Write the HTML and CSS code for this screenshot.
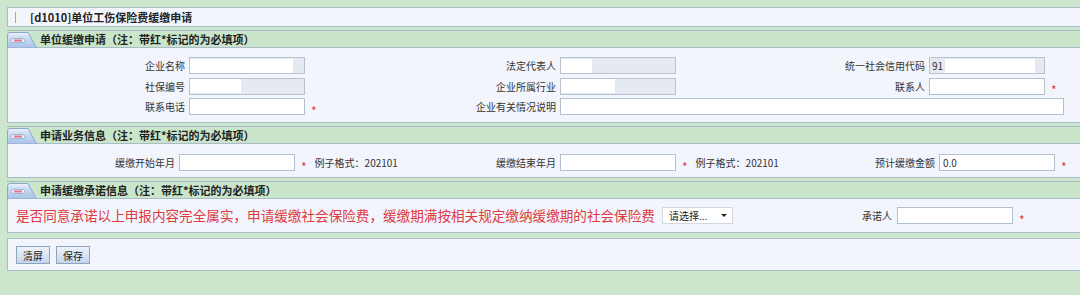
FILE: index.html
```html
<!DOCTYPE html>
<html lang="zh-CN">
<head>
    <meta charset="UTF-8">
    <title>单位工伤保险费缓缴申请</title>
    <link rel="stylesheet" href="styles.css">
</head>
<body>
<div class="page">
    <div class="titlebar">
        <span class="title-icon"></span>
        <span class="title-text">[d1010]单位工伤保险费缓缴申请</span>
    </div>

    <!-- 单位缓缴申请 -->
    <div class="section">
        <div class="sec-head">
            <svg class="tab" width="30" height="17" viewBox="0 0 30 17">
                <defs>
                    <linearGradient id="tabg" x1="0" y1="0" x2="0" y2="1">
                        <stop offset="0" stop-color="#eef4fc"/>
                        <stop offset="0.35" stop-color="#c9daf2"/>
                        <stop offset="1" stop-color="#a9c2e6"/>
                    </linearGradient>
                </defs>
                <path d="M0.5 17 V4 Q0.5 1.5 3 1.5 H21 L29.5 17 Z" fill="url(#tabg)" stroke="#8ea8cc"/>
                <rect x="4.5" y="7.5" width="13" height="4" rx="2" fill="#f6f8fd" stroke="#9fb3d3"/>
                <line x1="7" y1="9.5" x2="15" y2="9.5" stroke="#e46f8c" stroke-width="2"/>
            </svg>
            <span class="sec-title">单位缓缴申请（注：带红*标记的为必填项）</span>
        </div>
        <div class="sec-body grid-unit">
            <label>企业名称</label>
            <div class="field"><div class="ro"><span class="mask w103"></span></div></div>
            <label>法定代表人</label>
            <div class="field"><div class="ro"><span class="mask w31"></span></div></div>
            <label>统一社会信用代码</label>
            <div class="field"><div class="ro code">91<span class="mask w90"></span></div></div>

            <label>社保编号</label>
            <div class="field"><div class="ro"><span class="mask w51"></span></div></div>
            <label>企业所属行业</label>
            <div class="field"><div class="ro"><span class="mask w54"></span></div></div>
            <label>联系人</label>
            <div class="field"><input type="text"><span class="req">*</span></div>

            <label>联系电话</label>
            <div class="field"><input type="text"><span class="req">*</span></div>
            <label>企业有关情况说明</label>
            <div class="field span3"><input type="text" class="wide"></div>
        </div>
    </div>

    <!-- 申请业务信息 -->
    <div class="section">
        <div class="sec-head">
            <svg class="tab" width="30" height="17" viewBox="0 0 30 17">
                <path d="M0.5 17 V4 Q0.5 1.5 3 1.5 H21 L29.5 17 Z" fill="url(#tabg)" stroke="#8ea8cc"/>
                <rect x="4.5" y="7.5" width="13" height="4" rx="2" fill="#f6f8fd" stroke="#9fb3d3"/>
                <line x1="7" y1="9.5" x2="15" y2="9.5" stroke="#e46f8c" stroke-width="2"/>
            </svg>
            <span class="sec-title">申请业务信息（注：带红*标记的为必填项）</span>
        </div>
        <div class="sec-body grid-biz">
            <label>缓缴开始年月</label>
            <div class="field"><input type="text"><span class="req">*</span><span class="hint">例子格式：202101</span></div>
            <label>缓缴结束年月</label>
            <div class="field"><input type="text"><span class="req">*</span><span class="hint">例子格式：202101</span></div>
            <label>预计缓缴金额</label>
            <div class="field"><input type="text" value="0.0"><span class="req">*</span></div>
        </div>
    </div>

    <!-- 申请缓缴承诺信息 -->
    <div class="section">
        <div class="sec-head">
            <svg class="tab" width="30" height="17" viewBox="0 0 30 17">
                <path d="M0.5 17 V4 Q0.5 1.5 3 1.5 H21 L29.5 17 Z" fill="url(#tabg)" stroke="#8ea8cc"/>
                <rect x="4.5" y="7.5" width="13" height="4" rx="2" fill="#f6f8fd" stroke="#9fb3d3"/>
                <line x1="7" y1="9.5" x2="15" y2="9.5" stroke="#e46f8c" stroke-width="2"/>
            </svg>
            <span class="sec-title">申请缓缴承诺信息（注：带红*标记的为必填项）</span>
        </div>
        <div class="sec-body grid-promise">
            <span class="promise">是否同意承诺以上申报内容完全属实，申请缓缴社会保险费，缓缴期满按相关规定缴纳缓缴期的社会保险费</span>
            <div class="field"><span class="select">请选择...<i class="caret"></i></span></div>
            <label>承诺人</label>
            <div class="field"><input type="text"><span class="req">*</span></div>
        </div>
    </div>

    <div class="toolbar">
        <button class="btn">清屏</button>
        <button class="btn">保存</button>
    </div>
</div>
</body>
</html>
```

FILE: styles.css
```css
html, body { overflow: hidden; }
body { margin: 0; background: #cde7cf; font-family: "Noto Sans CJK SC", "Noto Sans", sans-serif; font-size: 10px; color: #333; }
.page { width: 1100px; padding: 7px 0 0 7px; }

.titlebar { height: 18px; display: flex; align-items: center; gap: 13px; padding-left: 7px; background: #f3f5fc; border: 1px solid #a9bcc8; border-right: none; }
.title-icon { width: 1px; height: 11px; background: #f4f2e6; border-left: 1px solid #aaa99f; }
.title-text { font-size: 11px; font-weight: bold; color: #222; line-height: 1; }

.section { margin-top: 3px; }
.sec-head { height: 16px; display: flex; align-items: flex-end; gap: 3px; background: #c9e5ca; border-top: 1px solid #a9bcc8; }
.tab { display: block; margin-bottom: -1px; }
.sec-title { font-size: 11px; font-weight: bold; color: #222; line-height: 16px; align-self: center; }
.sec-body { background: #f3f5fc; border: 1px solid #a9bcc8; border-right: none; display: grid; align-items: center; }

.grid-unit { grid-template-columns: 181px 230px 141px 230px 139px 1fr; grid-auto-rows: 17px; row-gap: 3.5px; padding: 9px 0 7px; }
.grid-biz { grid-template-columns: 171px 261px 120px 260px 119px 1fr; grid-auto-rows: 17px; padding: 10px 0 6px; }
.grid-promise { grid-template-columns: 654px 160px 75px 1fr; grid-auto-rows: 17px; padding: 8px 0 8px; }

label { text-align: right; padding-right: 4px; line-height: 17px; white-space: nowrap; }
.grid-promise label { padding-right: 5px; }
.field { display: flex; align-items: center; height: 17px; }
.span3 { grid-column: span 3; }

input { box-sizing: border-box; width: 116px; height: 17px; margin: 0; padding: 0 3px; border: 1px solid #b3c0cd; background: #fff; font: 10px "Noto Sans CJK SC", "Noto Sans", sans-serif; color: #333; outline: none; }
input.wide { width: 504px; }
.ro { box-sizing: border-box; width: 116px; height: 17px; display: flex; align-items: center; border: 1px solid #b8c3cf; background: #e5e9f1; line-height: 1; }
.ro.code { padding-left: 2px; gap: 2px; }
.mask { display: block; height: 14px; background: #fff; }
.w103 { width: 103px; }
.w31 { width: 31px; }
.w51 { width: 51px; }
.w54 { width: 54px; }
.w90 { width: 90px; }

.req { color: #df3b47; font-size: 12px; line-height: 1; margin: 8px 0 0 6px; }
.hint { margin-left: 8px; white-space: nowrap; }

.promise { padding-left: 8px; font-size: 13.6px; color: #de3a42; white-space: nowrap; line-height: 17px; }
.select { box-sizing: border-box; width: 71px; height: 17px; display: flex; align-items: center; justify-content: space-between; padding: 0 5px 0 6px; background: #fff; border: 1px solid #d4d8de; color: #222; line-height: 1; }
.caret { width: 0; height: 0; border-left: 3px solid transparent; border-right: 3px solid transparent; border-top: 3px solid #222; }

.toolbar { margin-top: 5px; height: 31px; background: #f3f5fc; border: 1px solid #a9bcc8; border-right: none; display: flex; align-items: flex-start; gap: 6px; padding: 0 0 0 8px; }
.btn { margin-top: 7px; width: 34px; height: 18px; padding: 0; font: 10px "Noto Sans CJK SC", "Noto Sans", sans-serif; color: #222; border: 1px solid #8ea4bf; background: linear-gradient(#eef3fa, #c4d5ea); }
```
